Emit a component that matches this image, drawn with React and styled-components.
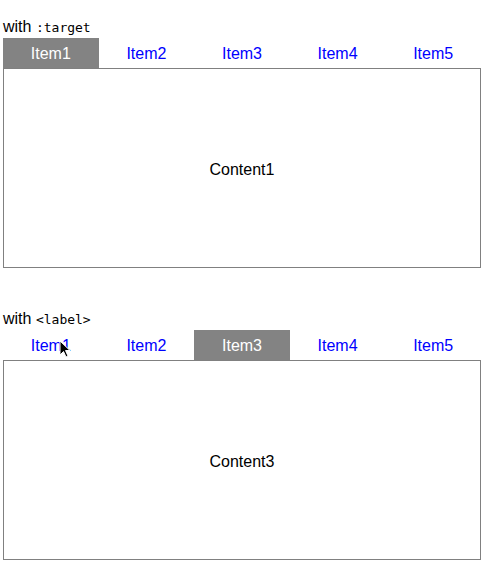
import React, { useState } from 'react';
import styled, { createGlobalStyle } from 'styled-components';

const GlobalStyle = createGlobalStyle`
  body {
    margin: 0;
    background: #fff;
    font-family: "Liberation Sans", Arial, sans-serif;
    font-size: 16px;
    color: #000;
  }
`;

const Page = styled.div`
  position: relative;
  padding: 16px 4px 0 3px;
`;

const Section = styled.section`
  margin-bottom: ${(props) => (props.last ? '0' : '40px')};
`;

const Heading = styled.div`
  height: 22px;
  line-height: 22px;
  font-size: 16px;
`;

const Code = styled.code`
  font-family: "DejaVu Sans Mono", monospace;
  font-size: 13px;
`;

const TabBar = styled.div`
  display: grid;
  grid-template-columns: repeat(5, 1fr);
  height: 30px;
`;

const Tab = styled.a`
  display: flex;
  align-items: center;
  justify-content: center;
  padding-top: 2px;
  text-decoration: none;
  cursor: pointer;
  color: ${(props) => (props.active ? '#fff' : '#0000ff')};
  background: ${(props) => (props.active ? '#838383' : 'transparent')};
`;

const Panel = styled.div`
  box-sizing: border-box;
  height: 200px;
  padding-top: 4px;
  border: 1px solid #808080;
  display: flex;
  align-items: center;
  justify-content: center;
`;

const Cursor = styled.svg`
  position: absolute;
  left: 59px;
  top: 340px;
`;

const items = ['Item1', 'Item2', 'Item3', 'Item4', 'Item5'];

const Tabs = ({ title, initial }) => {
  const [active, setActive] = useState(initial);
  return (
    <Section last={initial === 2}>
      <Heading>
        with <Code>{title}</Code>
      </Heading>
      <TabBar>
        {items.map((item, i) => (
          <Tab key={item} active={active === i} onClick={() => setActive(i)}>
            {item}
          </Tab>
        ))}
      </TabBar>
      <Panel>Content{active + 1}</Panel>
    </Section>
  );
};

const App = () => (
  <Page>
    <GlobalStyle />
    <Tabs title=":target" initial={0} />
    <Tabs title="<label>" initial={2} />
    <Cursor width="12" height="18" viewBox="0 0 12 18">
      <path d="M1 1 L1 15 L4.5 11.5 L7 17 L9 16 L6.5 10.5 L11 10.5 Z" fill="#000" stroke="#fff" strokeWidth="1" />
    </Cursor>
  </Page>
);

export default App;
